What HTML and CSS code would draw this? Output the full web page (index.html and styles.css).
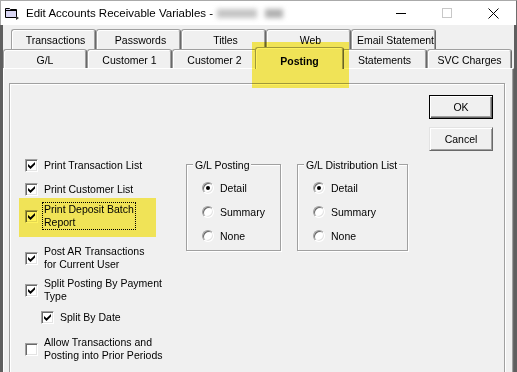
FILE: index.html
```html
<!DOCTYPE html>
<html lang="en">
<head>
  <meta charset="UTF-8" />
  <meta name="viewport" content="width=device-width, initial-scale=1.0" />
  <title>Edit Accounts Receivable Variables</title>
  <link rel="stylesheet" href="styles.css">
</head>
<body>
  <div class="window">
    <div class="titlebar">
      <svg class="app-icon" width="14" height="13" viewBox="0 0 14 13">
        <path d="M0.5 1.5 H4.5 L5.5 2.5 H11.5 V10.5 H0.5 Z" fill="#d9d6f3" stroke="#000" />
        <path d="M0.5 3.5 H11.5" stroke="#000" />
        <path d="M11 9 L14 11 L11 13 Z" fill="#333" />
      </svg>
      <span class="title">Edit Accounts Receivable Variables -</span>
      <span class="blurred"><i></i><i></i></span>
      <div class="caption">
        <span class="cap"><span class="min-line"></span></span>
        <span class="cap"><span class="max-box"></span></span>
        <span class="cap">
          <svg width="11" height="11" viewBox="0 0 11 11">
            <path d="M0.5 0.5 L10.5 10.5 M10.5 0.5 L0.5 10.5" stroke="#000" stroke-width="1" />
          </svg>
        </span>
      </div>
    </div>

    <div class="client">
      <div class="tab-row back">
        <div class="tab">Transactions</div>
        <div class="tab">Passwords</div>
        <div class="tab">Titles</div>
        <div class="tab">Web</div>
        <div class="tab">Email Statement</div>
      </div>
      <div class="tab-row front">
        <div class="tab">G/L</div>
        <div class="tab">Customer 1</div>
        <div class="tab">Customer 2</div>
        <div class="tab active">Posting</div>
        <div class="tab">Statements</div>
        <div class="tab">SVC Charges</div>
      </div>

      <div class="page">
        <div class="frame">
          <div class="options">
            <div class="opt r1">
              <span class="check"><svg width="8" height="7" viewBox="0 0 8 7"><path d="M0 2 L2.5 4.3 L7 0 L7 2.6 L2.5 7 L0 4.6 Z" /></svg></span>
              <span class="lbl">Print Transaction List</span>
            </div>
            <div class="opt r2">
              <span class="check"><svg width="8" height="7" viewBox="0 0 8 7"><path d="M0 2 L2.5 4.3 L7 0 L7 2.6 L2.5 7 L0 4.6 Z" /></svg></span>
              <span class="lbl">Print Customer List</span>
            </div>
            <div class="opt r3 focus">
              <span class="check"><svg width="8" height="7" viewBox="0 0 8 7"><path d="M0 2 L2.5 4.3 L7 0 L7 2.6 L2.5 7 L0 4.6 Z" /></svg></span>
              <span class="lbl">Print Deposit Batch<br>Report</span>
            </div>
            <div class="opt r4">
              <span class="check"><svg width="8" height="7" viewBox="0 0 8 7"><path d="M0 2 L2.5 4.3 L7 0 L7 2.6 L2.5 7 L0 4.6 Z" /></svg></span>
              <span class="lbl">Post AR Transactions<br>for Current User</span>
            </div>
            <div class="opt r5">
              <span class="check"><svg width="8" height="7" viewBox="0 0 8 7"><path d="M0 2 L2.5 4.3 L7 0 L7 2.6 L2.5 7 L0 4.6 Z" /></svg></span>
              <span class="lbl">Split Posting By Payment<br>Type</span>
            </div>
            <div class="opt r6">
              <span class="check"><svg width="8" height="7" viewBox="0 0 8 7"><path d="M0 2 L2.5 4.3 L7 0 L7 2.6 L2.5 7 L0 4.6 Z" /></svg></span>
              <span class="lbl">Split By Date</span>
            </div>
            <div class="opt r7">
              <span class="check"></span>
              <span class="lbl">Allow Transactions and<br>Posting into Prior Periods</span>
            </div>
          </div>

          <div class="group gl-posting">
            <span class="group-title">G/L Posting</span>
            <div class="radio-row"><span class="radio on"></span>Detail</div>
            <div class="radio-row"><span class="radio"></span>Summary</div>
            <div class="radio-row"><span class="radio"></span>None</div>
          </div>

          <div class="group gl-dist">
            <span class="group-title">G/L Distribution List</span>
            <div class="radio-row"><span class="radio on"></span>Detail</div>
            <div class="radio-row"><span class="radio"></span>Summary</div>
            <div class="radio-row"><span class="radio"></span>None</div>
          </div>

          <div class="buttons">
            <div class="btn default">OK</div>
            <div class="btn">Cancel</div>
          </div>
        </div>
      </div>

      <!-- highlighter marks -->
      <div class="hl hl-tab"></div>
      <div class="hl hl-deposit"></div>
    </div>
  </div>
</body>
</html>
```

FILE: styles.css
```css
html, body {
  margin: 0;
  padding: 0;
}
body {
  width: 517px;
  height: 372px;
  overflow: hidden;
  background: #f0f0f0;
  font-family: "Liberation Sans", Arial, sans-serif;
  font-size: 10.5px;
  color: #000;
}
.window {
  height: 372px;
  display: flex;
  flex-direction: column;
  overflow: hidden;
}

/* title bar */
.titlebar {
  height: 24px;
  flex: none;
  display: flex;
  align-items: center;
  background: #fff;
  border-top: 1px solid #aaaaaa;
  border-left: 1px solid #aaaaaa;
  border-right: 1px solid #6e6e6e;
}
.app-icon {
  margin-left: 4px;
  flex: none;
}
.title {
  margin-left: 7px;
  font-size: 11.5px;
  white-space: nowrap;
}
.blurred {
  margin-left: 4px;
  width: 74px;
  height: 16px;
  display: flex;
  align-items: center;
  gap: 8px;
  filter: blur(2.5px);
}
.blurred i {
  display: block;
  height: 9px;
  background: #c4c4c4;
}
.blurred i:first-child { width: 40px; }
.blurred i:last-child { width: 18px; background: #b0b0b0; }
.caption {
  margin-left: auto;
  display: flex;
}
.cap {
  width: 46px;
  height: 24px;
  display: flex;
  align-items: center;
  justify-content: center;
}
.min-line {
  width: 10px;
  height: 1px;
  background: #000;
}
.max-box {
  width: 10px;
  height: 10px;
  box-sizing: border-box;
  border: 1px solid #c8c8c8;
}

/* client area */
.client {
  flex: 1;
  position: relative;
  border-left: 3px solid #5f5f5f;
  border-right: 3px solid #5f5f5f;
  padding-top: 4px;
}
.tab-row {
  display: flex;
}
.tab-row.back {
  margin-left: 8px;
  height: 20px;
}
.tab-row.front {
  height: 19px;
}
.tab {
  box-sizing: border-box;
  width: 85px;
  flex: none;
  background: #f0f0f0;
  border-top: 1px solid #a0a0a0;
  border-left: 1px solid #a0a0a0;
  border-right: 1px solid #696969;
  border-radius: 3px 3px 0 0;
  box-shadow: inset 1px 1px #fff, inset -1px 0 #a0a0a0;
  display: flex;
  justify-content: center;
  align-items: center;
  white-space: nowrap;
}
.back .tab {
  padding: 1px 0 0 4px;
}
.front .tab {
  padding-top: 2px;
}
.front .tab:first-child {
  width: 84px;
}
.tab.active {
  position: relative;
  z-index: 1;
  width: 89px;
  margin: -2px -2px -1px;
  padding-top: 4px;
  font-weight: bold;
}

.page {
  height: 300px;
  border-top: 1px solid #fff;
  border-left: 1px solid #fff;
  border-right: 1px solid #696969;
  box-shadow: inset -1px 0 #a0a0a0;
  padding: 14px 8px 0 5px;
}
.frame {
  height: 300px;
  border: 1px solid #a0a0a0;
  box-shadow: inset 1px 1px #fff, 1px 1px #fff;
  display: flex;
  align-items: flex-start;
}

/* check boxes */
.options {
  width: 161px;
  margin: 69px 0 0 15px;
  flex: none;
}
.opt {
  display: flex;
  align-items: center;
}
.r1, .r2, .r6 { height: 24px; }
.r3, .r4, .r5, .r7 { height: 30px; }
.r4 { margin-top: 12px; }
.r5 { margin-top: 2px; }
.r6 { margin-left: 16px; }
.r7 { margin-top: 5px; }
.check {
  width: 13px;
  height: 13px;
  flex: none;
  box-sizing: border-box;
  border: 1px solid;
  border-color: #a0a0a0 #fff #fff #a0a0a0;
  box-shadow: inset 1px 1px #696969, inset -1px -1px #e3e3e3;
  background: #fff;
  display: flex;
  align-items: center;
  justify-content: center;
}
.check svg {
  margin: 1px 0 0 1px;
  fill: #000;
}
.lbl {
  margin-left: 4px;
  padding: 0 1px;
  border: 1px dotted transparent;
  line-height: 13px;
  white-space: nowrap;
}
.focus .lbl {
  border-color: #000;
}

/* radio groups */
.group {
  position: relative;
  flex: none;
  box-sizing: border-box;
  height: 87px;
  margin-top: 80px;
  padding: 11px 0 0 15px;
  border: 1px solid #a0a0a0;
  box-shadow: inset 1px 1px #fff, 1px 1px #fff;
}
.gl-posting {
  width: 95px;
}
.gl-dist {
  width: 111px;
  margin-left: 16px;
}
.group-title {
  position: absolute;
  top: -7px;
  left: 6px;
  padding: 0 2px;
  line-height: 14px;
  background: #f0f0f0;
  white-space: nowrap;
}
.radio-row {
  height: 24px;
  display: flex;
  align-items: center;
}
.radio {
  width: 12px;
  height: 12px;
  box-sizing: border-box;
  margin-right: 6px;
  border-radius: 50%;
  border: 1px solid;
  border-color: #a0a0a0 #fff #fff #a0a0a0;
  box-shadow: inset 1px 1px #696969, inset -1px -1px #e3e3e3;
  background: #fff;
  display: flex;
  align-items: center;
  justify-content: center;
}
.radio.on::after {
  content: "";
  width: 4px;
  height: 4px;
  border-radius: 50%;
  background: #000;
}

/* buttons */
.buttons {
  margin: 11px 0 0 21px;
  display: flex;
  flex-direction: column;
  gap: 8px;
}
.btn {
  width: 64px;
  height: 24px;
  box-sizing: border-box;
  border: 1px solid;
  border-color: #e3e3e3 #696969 #696969 #e3e3e3;
  box-shadow: inset 1px 1px #fff, inset -1px -1px #a0a0a0;
  display: flex;
  align-items: center;
  justify-content: center;
}
.btn.default {
  border-color: #000;
  box-shadow: inset 1px 1px #fff, inset -1px -1px #696969, inset -2px -2px #a0a0a0;
}

/* highlighter */
.hl {
  position: absolute;
  background: #fff25c;
  mix-blend-mode: multiply;
  z-index: 2;
}
.hl-tab {
  left: 249px;
  top: 17px;
  width: 97px;
  height: 46px;
}
.hl-deposit {
  left: 16px;
  top: 173px;
  width: 137px;
  height: 39px;
}
```
